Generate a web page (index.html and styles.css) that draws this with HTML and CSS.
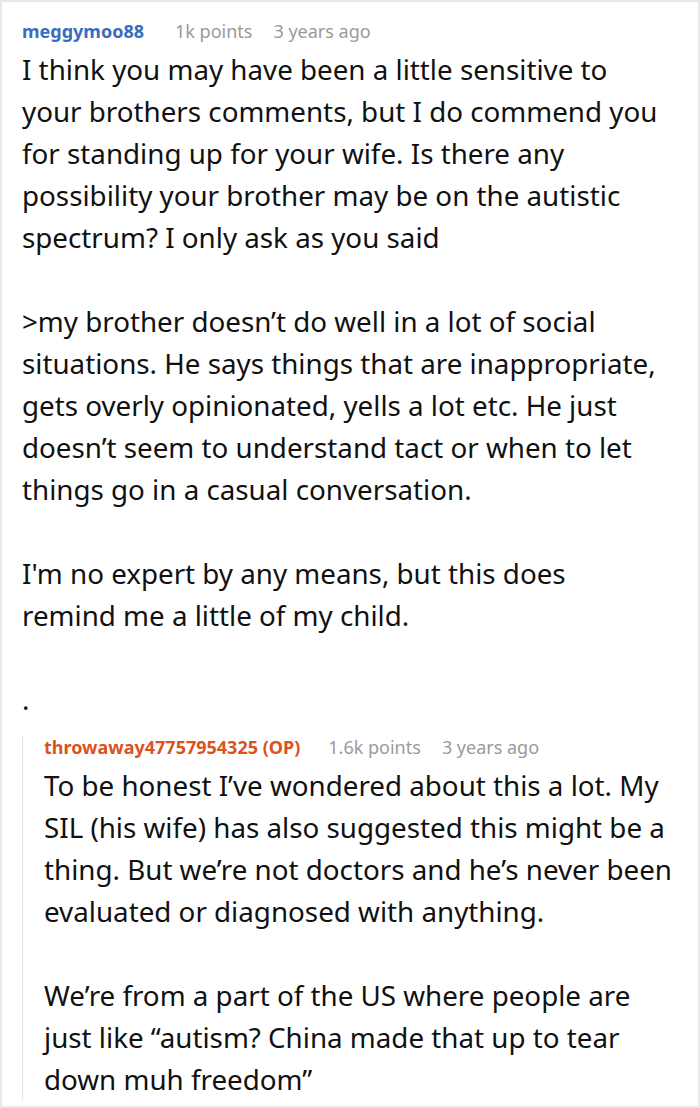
FILE: index.html
```html
<!DOCTYPE html>
<html>
<head>
<meta charset="utf-8">
<link rel="stylesheet" href="styles.css">
</head>
<body>
<div class="page">
  <div class="comment">
    <div class="meta">
      <span class="user">meggymoo88</span>
      <span class="info">1k points</span>
      <span class="info">3 years ago</span>
    </div>
    <div class="body main-body">
      <p>I think you may have been a little sensitive to your brothers comments, but I do commend you for standing up for your wife. Is there any possibility your brother may be on the autistic spectrum? I only ask as you said</p>
      <p>&gt;my brother doesn’t do well in a lot of social situations. He says things that are inappropriate, gets overly opinionated, yells a lot etc. He just doesn’t seem to understand tact or when to let things go in a casual conversation.</p>
      <p>I'm no expert by any means, but this does remind me a little of my child.</p>
      <p>.</p>
    </div>
    <div class="reply">
      <div class="meta">
        <span class="user op">throwaway47757954325 (OP)</span>
        <span class="info">1.6k points</span>
        <span class="info">3 years ago</span>
      </div>
      <div class="body">
        <p>To be honest I’ve wondered about this a lot. My SIL (his wife) has also suggested this might be a thing. But we’re not doctors and he’s never been evaluated or diagnosed with anything.</p>
        <p>We’re from a part of the US where people are just like “autism? China made that up to tear down muh freedom”</p>
      </div>
    </div>
  </div>
</div>
</body>
</html>
```
FILE: styles.css
```css
html, body {
  margin: 0;
  padding: 0;
  background: #fff;
}
.page {
  box-sizing: border-box;
  width: 700px;
  height: 1108px;
  border: 2px solid #e8e8e8;
  overflow: hidden;
  font-family: "Noto Sans", "Open Sans", sans-serif;
  color: #111;
}
.comment {
  padding: 17px 0 0 20px;
}
.meta {
  display: flex;
  font-size: 18px;
  line-height: 24px;
  height: 24px;
}
.user {
  font-weight: 700;
  color: #3a6cbd;
  margin-right: 31px;
}
.info {
  color: #9a9a9a;
  margin-right: 21px;
}
.user.op {
  color: #d9531e;
  margin-right: 28px;
}
.body {
  margin-top: 5px;
  font-size: 27.75px;
  line-height: 42px;
}
.main-body {
  padding-right: 34px;
}
.body p {
  margin: 0 0 42px 0;
}
.body p:last-child {
  margin-bottom: 0;
}
.reply {
  margin-top: 15px;
  border-left: 1px solid #e2e2e2;
  padding-left: 21px;
  padding-right: 20px;
}
.reply .body {
  margin-top: 5px;
}
```
